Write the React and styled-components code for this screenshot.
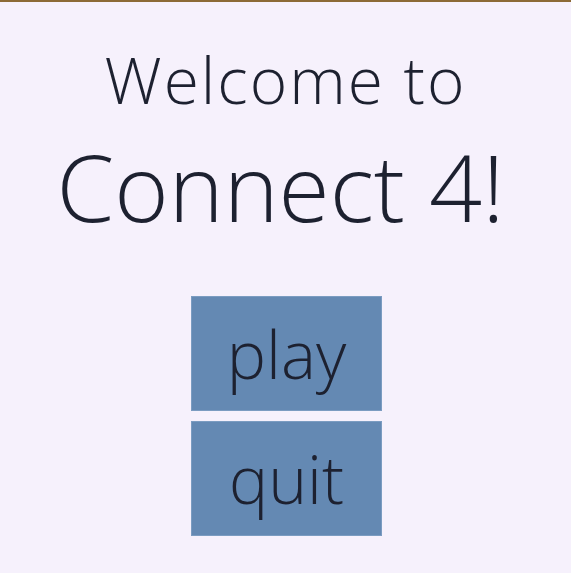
import React from 'react'
import styled, { createGlobalStyle } from 'styled-components'

const GlobalStyle = createGlobalStyle`
  html, body {
    margin: 0;
    padding: 0;
    background: #f6f1fc;
  }
  body {
    font-family: "Open Sans", "Lato", sans-serif;
    color: #1d2130;
  }
`

const Screen = styled.main`
  min-height: 573px;
  box-sizing: border-box;
  border-top: 2px solid #8c6a36;
  display: flex;
  flex-direction: column;
  align-items: center;
`

const Title = styled.h1`
  margin: 46px 0 0;
  font-weight: 300;
  text-align: center;
  line-height: 1;
`

const Line = styled.span`
  display: block;
  font-size: ${props => props.size};
  letter-spacing: ${props => props.spacing || '0'};
  margin-top: ${props => props.gap || '0'};
  padding-right: ${props => props.nudge || '0'};
`

const Menu = styled.nav`
  margin: 63px 0 0 2px;
  display: flex;
  flex-direction: column;
  gap: 10px;
`

const MenuButton = styled.button`
  width: 191px;
  height: 115px;
  border: 1px solid #7b9cc1;
  background: #6489b3;
  color: #1d2130;
  font-family: inherit;
  font-weight: 300;
  font-size: 66px;
  line-height: 1;
  padding: 0 0 2px;
  cursor: pointer;
`

export default function App() {
  return (
    <>
      <GlobalStyle />
      <Screen>
        <Title>
          <Line size="64px" spacing="2px">Welcome to</Line>
          <Line size="93px" gap="28px" nudge="10px">Connect 4!</Line>
        </Title>
        <Menu>
          <MenuButton>play</MenuButton>
          <MenuButton>quit</MenuButton>
        </Menu>
      </Screen>
    </>
  )
}
